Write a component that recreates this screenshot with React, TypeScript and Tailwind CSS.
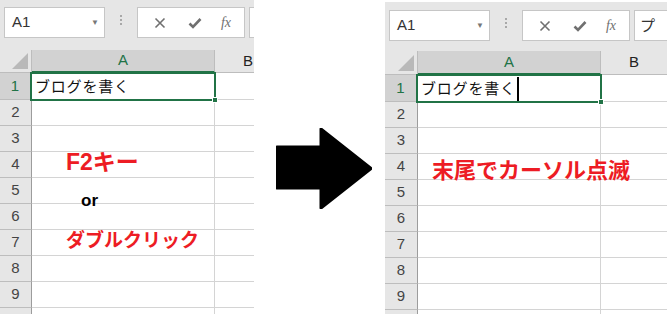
import React from 'react';

const JP = "font-['Noto_Sans_CJK_JP',sans-serif]";

type PaneProps = {
  width: number;
  topPad: number;
  barH: number;
  headH: number;
  rowHeadW: number;
  editing?: boolean;
  nextText?: string;
  children?: React.ReactNode;
};

const XIcon = () => (
  <svg width="12" height="12" viewBox="0 0 12 12">
    <path d="M1.5 1.5 L10.5 10.5 M10.5 1.5 L1.5 10.5" stroke="#707070" strokeWidth="1.6" fill="none" />
  </svg>
);

const CheckIcon = () => (
  <svg width="14" height="12" viewBox="0 0 14 12">
    <path d="M1.5 6.5 L5 10 L12.5 2" stroke="#707070" strokeWidth="2.6" fill="none" />
  </svg>
);

const ExcelPane: React.FC<PaneProps> = ({ width, topPad, barH, headH, rowHeadW, editing, nextText, children }) => {
  const rows = [2, 3, 4, 5, 6, 7, 8, 9];
  return (
    <div className="relative shrink-0 overflow-hidden bg-white" style={{ width }}>
      {/* formula bar */}
      <div className="flex items-start bg-[#e6e6e6]" style={{ height: barH, paddingTop: topPad }}>
        <div className="ml-[4px] flex h-[31px] w-[101px] shrink-0 items-center justify-between border border-[#c6c6c6] bg-white pl-[7px] pr-[5px]">
          <span className="font-['Liberation_Sans',sans-serif] text-[15px] text-[#333]">A1</span>
          <span className="mb-[2px] text-[8px] text-[#777]">▼</span>
        </div>
        <div className="flex w-[32px] shrink-0 justify-center pt-[8px]">
          <div className="flex flex-col gap-[2px]">
            <div className="h-[2px] w-[2px] bg-[#a8a8a8]" />
            <div className="h-[2px] w-[2px] bg-[#a8a8a8]" />
            <div className="h-[2px] w-[2px] bg-[#a8a8a8]" />
          </div>
        </div>
        <div className="flex h-[31px] w-[108px] shrink-0 items-center border border-[#c6c6c6] bg-white">
          <div className="flex w-[40px] justify-center pl-[4px]"><XIcon /></div>
          <div className="flex w-[34px] justify-center pt-[1px]"><CheckIcon /></div>
          <div className="flex w-[28px] justify-center font-['Liberation_Serif',serif] text-[14px] italic text-[#707070]">fx</div>
        </div>
        <div className="ml-[4px] flex h-[31px] min-w-[20px] flex-1 items-center border border-r-0 border-[#c6c6c6] bg-white pl-[5px]">
          <span className={`${JP} text-[15px] text-[#333]`}>{nextText}</span>
        </div>
      </div>

      {/* column header */}
      <div className="flex bg-[#e6e6e6]" style={{ height: headH }}>
        <div className="relative shrink-0 border-b border-r border-[#bdbdbd]" style={{ width: rowHeadW }}>
          <svg className="absolute bottom-[3px] right-[3px]" width="16" height="16" viewBox="0 0 16 16">
            <path d="M16 0 L16 16 L0 16 Z" fill="#b9b9b9" />
          </svg>
        </div>
        <div className="flex w-[183px] shrink-0 items-center justify-center border-b-2 border-r border-b-[#217346] border-r-[#bdbdbd] bg-[#d2d2d2] font-['Liberation_Sans',sans-serif] text-[15px] text-[#217346]">
          A
        </div>
        <div className="flex w-[66px] shrink-0 items-center justify-center border-b border-[#bdbdbd] font-['Liberation_Sans',sans-serif] text-[15px] text-[#222]">
          B
        </div>
      </div>

      {/* row 1 */}
      <div className="flex h-[27px]">
        <div className="flex shrink-0 items-center justify-center border-b border-r-2 border-b-[#bdbdbd] border-r-[#217346] bg-[#d2d2d2] font-['Liberation_Sans',sans-serif] text-[15px] text-[#217346]" style={{ width: rowHeadW }}>
          1
        </div>
        <div className="relative w-[183px] shrink-0 border-b border-r border-[#d4d4d4]">
          <div className="absolute -left-[2px] -top-[1px] bottom-[-2px] right-[-2px] flex items-center border-2 border-[#217346] pl-[3px]">
            <span className={`${JP} text-[15px] tracking-[0.8px] text-[#111]`}>ブログを書く</span>
            {editing && <span className="ml-[1px] h-[24px] w-[2px] bg-black" />}
            <span className="absolute bottom-[-4px] right-[-4px] h-[6px] w-[6px] border border-white bg-[#217346]" />
          </div>
        </div>
        <div className="w-[66px] shrink-0 border-b border-[#d4d4d4]" />
      </div>

      {/* remaining rows */}
      {rows.map((r) => (
        <div key={r} className="flex h-[26px]">
          <div className="flex shrink-0 items-center justify-center border-b border-r border-b-[#bdbdbd] border-r-[#9c9c9c] bg-[#e6e6e6] font-['Liberation_Sans',sans-serif] text-[15px] text-[#444]" style={{ width: rowHeadW }}>
            {r}
          </div>
          <div className="w-[183px] shrink-0 border-b border-r border-[#d4d4d4]" />
          <div className="w-[66px] shrink-0 border-b border-[#d4d4d4]" />
        </div>
      ))}
      <div className="flex h-[26px]">
        <div className="shrink-0 border-r border-r-[#9c9c9c] bg-[#e6e6e6]" style={{ width: rowHeadW }} />
        <div className="w-[183px] shrink-0 border-r border-[#d4d4d4]" />
      </div>

      {children}
    </div>
  );
};

export default function App() {
  return (
    <div className="relative flex h-[314px] w-[667px] overflow-hidden bg-white">
      <ExcelPane width={254} topPad={7} barH={50} headH={23} rowHeadW={32}>
        <div className={`absolute left-[66px] top-[149px] ${JP} text-[23px] font-bold leading-none text-[#ed1c24]`}>
          <span className="font-['Liberation_Sans',sans-serif]">F2</span>キー
        </div>
        <div className="absolute left-[81px] top-[192px] font-['Liberation_Sans',sans-serif] text-[17px] font-bold leading-none text-black">
          or
        </div>
        <div className={`absolute left-[66px] top-[229px] ${JP} text-[19px] font-bold leading-none text-[#ed1c24]`}>
          ダブルクリック
        </div>
      </ExcelPane>

      <div className="flex-1 pl-[22px] pt-[128px]">
        <svg width="96" height="81" viewBox="-1 -1 96 81">
          <path
            d="M0 18 L44 18 L44 0 L94 39.5 L44 79 L44 59 L0 59 Z"
            fill="#000"
            stroke="#000"
            strokeWidth="3"
            strokeLinejoin="round"
          />
        </svg>
      </div>

      <div className="pt-[2px]">
        <ExcelPane width={282} topPad={8} barH={49} headH={24} rowHeadW={33} editing nextText="プ">
          <div className={`absolute left-[47px] top-[155px] ${JP} text-[22px] font-bold leading-none text-[#ed1c24]`}>
            末尾でカーソル点滅
          </div>
        </ExcelPane>
      </div>
    </div>
  );
}
